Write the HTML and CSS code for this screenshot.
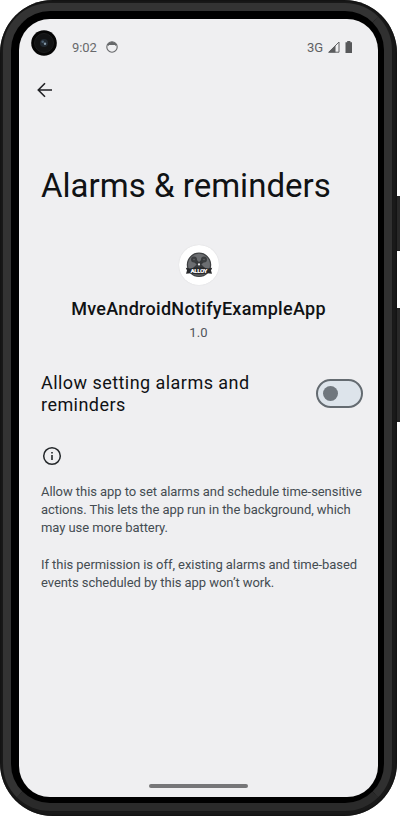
FILE: index.html
```
<!DOCTYPE html>
<html lang="en">
<head>
<meta charset="utf-8">
<title>Alarms &amp; reminders</title>
<link rel="stylesheet" href="styles.css">
</head>
<body>
<div class="phone">
  <span class="key power"></span>
  <span class="key volume"></span>
  <div class="bezel">
    <div class="screen">
      <header class="status">
        <svg class="camera" width="26" height="26" viewBox="0 0 26 26">
          <circle cx="13" cy="13" r="12.8" fill="#050505"/>
          <circle cx="13" cy="13" r="9.5" fill="#121314" stroke="#1c1d1e"/>
          <circle cx="13" cy="13" r="4" fill="#202830"/>
          <circle cx="11.7" cy="11.8" r="1.3" fill="#4b5f70"/>
          <circle cx="14" cy="13.7" r="1.2" fill="#8498a8"/>
        </svg>
        <span class="clock">9:02</span>
        <svg class="face" width="12" height="12" viewBox="0 0 12 12">
          <circle cx="6" cy="6" r="5.2" fill="none" stroke="#66686a" stroke-width="1.1"/>
          <path d="M1.2 3.8Q3 .8 6 .8T10.8 3.8L9.4 5 9 3.9H3L2.6 5z" fill="#66686a"/>
        </svg>
        <span class="network">3G</span>
        <svg class="signal" width="12" height="12" viewBox="0 0 12 12">
          <path d="M.9 11.2L11 1V11.2z" fill="none" stroke="#626365" stroke-width="1"/>
          <path d="M0 11.6L7.5 4.2V11.6z" fill="#5b5c5e"/>
        </svg>
        <svg class="battery" width="8" height="12" viewBox="0 0 8 12">
          <path d="M2.2 0H5.4V1.2H7V12H.5V1.2H2.2z" fill="#57585a"/>
        </svg>
      </header>
      <svg class="back" width="16" height="16" viewBox="0 0 16 16" fill="none" stroke="#202124" stroke-width="1.6">
        <path d="M15 8H1.6M8 1.3L1.3 8L8 14.7"/>
      </svg>
      <h1>Alarms &amp; reminders</h1>
      <section class="app">
        <div class="app-icon">
          <svg width="28" height="26" viewBox="0 0 28 26">
            <circle cx="14" cy="12.8" r="11.6" fill="#6c6e71" stroke="#3e4042" stroke-width="1.3"/>
            <path d="M8.5 7L19.5 18M19.5 7L8.5 18" stroke="#37393b" stroke-width="3.4"/>
            <circle cx="9" cy="7.5" r="3" fill="#3b3d3f"/>
            <circle cx="19" cy="7.5" r="3" fill="#3b3d3f"/>
            <circle cx="9" cy="7.5" r=".8" fill="#626467"/>
            <circle cx="19" cy="7.5" r=".8" fill="#626467"/>
            <circle cx="14" cy="12.4" r="1.1" fill="#eee"/>
            <path d="M.8 15.8L5 16.4Q14 14 23 16.4L27.2 15.8L26 18.5L27 21.8L22.5 21.2Q14 24 5.5 21.2L1 21.8L2 18.5z" fill="#28292b"/>
            <text x="14" y="20.9" text-anchor="middle" textLength="17" class="logo-text">ALLOY</text>
          </svg>
        </div>
        <h2>MveAndroidNotifyExampleApp</h2>
        <p class="version">1.0</p>
      </section>
      <section class="setting">
        <p class="label">Allow setting alarms and reminders</p>
        <span class="switch"><span class="thumb"></span></span>
      </section>
      <svg class="info" width="20" height="20" viewBox="0 0 20 20">
        <circle cx="10" cy="10" r="8.3" fill="none" stroke="#24282b" stroke-width="1.5"/>
        <path d="M9.2 9H10.8V14H9.2zM9.2 6H10.8V7.6H9.2z" fill="#24282b"/>
      </svg>
      <div class="help">
        <p>Allow this app to set alarms and schedule time-sensitive<br>actions. This lets the app run in the background, which<br>may use more battery.</p>
        <p>If this permission is off, existing alarms and time-based<br>events scheduled by this app won’t work.</p>
      </div>
      <div class="home"></div>
    </div>
  </div>
</div>
</body>
</html>
```

FILE: styles.css
```
* { box-sizing: border-box; margin: 0; padding: 0; }
body { width: 400px; height: 816px; background: #fff; overflow: hidden; font-family: Roboto, sans-serif; }
.phone {
  position: relative;
  width: 397px; height: 816px;
  padding: 3px 5px 5px 3px;
  border-radius: 53px;
  background: #1b1b1b;
  box-shadow: inset 0 0 2px 1px #111;
}
.bezel {
  height: 808px;
  border: 8px solid;
  border-color: #333 #303030 #2a2a2a #333;
  border-radius: 47px;
  padding: 8px;
  background: #000;
  box-shadow: 0 0 1px 1px #191919, inset 0 0 2px 1px #000;
}
.screen {
  display: flex; flex-direction: column;
  width: 359px; height: 778px;
  border-radius: 31px;
  background: #efeff1;
  color: #101214;
}
.key { position: absolute; left: 397px; width: 3px; background: #292929; }
.power { top: 196px; height: 55px; }
.volume { top: 308px; height: 114px; }
.status { display: flex; align-items: center; height: 56px; padding-left: 11.5px; color: #68696c; }
.camera { margin-top: -8px; }
.clock { width: 26px; margin-left: 15.5px; font-size: 13px; letter-spacing: -.1px; white-space: nowrap; }
.face { margin-left: 8px; }
.network { margin-left: 189px; width: 17px; font-size: 13px; color: #5f6063; }
.signal { margin-left: 4px; }
.battery { margin-left: 5px; }
.back { margin: 7px 0 0 18px; }
h1 { margin: 65px 0 0 22px; font-weight: 400; font-size: 33px; line-height: 45px; letter-spacing: 0.02px; white-space: nowrap; }
.app { display: flex; flex-direction: column; align-items: center; margin-top: 37px; }
.app-icon { display: flex; align-items: center; justify-content: center; width: 40px; height: 40px; border-radius: 50%; background: #fff; box-shadow: 0 0 1px #c9c9cc; }
.logo-text { font: 900 6.2px Roboto, sans-serif; fill: #fff; }
h2 { margin-top: 10px; font-weight: 500; font-size: 18px; line-height: 27px; letter-spacing: .3px; }
.version { font-size: 13px; line-height: 19px; margin-top: 1px; color: #50545a; letter-spacing: .1px; }
.setting { display: flex; align-items: center; justify-content: space-between; margin: 29px 15px 0 22px; }
.label { width: 220px; padding-top: 1px; font-size: 18px; line-height: 22px; letter-spacing: .45px; }
.switch { display: flex; align-items: center; width: 47px; height: 29px; padding-left: 5px; border: 2px solid #646b71; border-radius: 15px; background: #dde4eb; }
.thumb { width: 15px; height: 15px; border-radius: 50%; background: #70777e; }
.info { margin: 30px 0 0 23px; }
.help { margin: 17px 0 0 22px; font-size: 13px; line-height: 18.2px; letter-spacing: -.06px; color: #444c51; white-space: nowrap; }
.help p + p { margin-top: 18.2px; }
.home { align-self: center; width: 99px; height: 4px; margin-top: auto; margin-bottom: 9px; border-radius: 2px; background: #767678; }
```
